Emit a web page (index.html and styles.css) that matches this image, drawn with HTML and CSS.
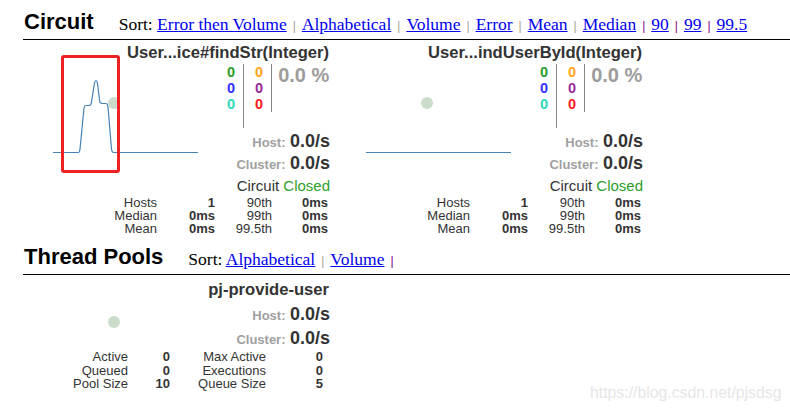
FILE: index.html
```html
<!DOCTYPE html>
<html>
<head>
<meta charset="utf-8">
<link rel="stylesheet" href="styles.css">
</head>
<body>
<div class="page">
  <section class="section">
    <div class="section-head">
      <h2>Circuit</h2>
      <div class="sort">Sort: <a href="#">Error then Volume</a><span class="sep">|</span><a href="#">Alphabetical</a><span class="sep">|</span><a href="#">Volume</a><span class="sep">|</span><a href="#">Error</a><span class="sep">|</span><a href="#">Mean</a><span class="sep">|</span><a href="#">Median</a><span class="sep visited">|</span><a href="#">90</a><span class="sep visited">|</span><a href="#">99</a><span class="sep visited">|</span><a href="#">99.5</a></div>
    </div>
    <div class="cards">
      <div class="card circuit">
        <div class="card-title">User...ice#findStr(Integer)</div>
        <div class="chart">
          <svg width="175" height="132" viewBox="0 0 175 132">
            <path d="M3 90.5 L28.5 90.5 Q29.5 90.5 30 87 L34 46 Q34.5 43.5 36 43.5 L39.5 43.5 Q41 43.5 41.5 40 L44.5 21 Q46 16 47.5 21 L49.5 38 Q50 41.5 52 41.5 L56 41.5 Q57.5 41.5 58 45 L61.5 87 Q62 90.5 63.5 90.5 L148 90.5" fill="none" stroke="#4682b4" stroke-width="1.2"/>
            <circle cx="64" cy="41" r="6" fill="#cbdccb"/>
          </svg>
        </div>
        <div class="side">
          <div class="counters">
            <div class="ccol c1"><span class="success">0</span><span class="short">0</span><span class="bad">0</span></div>
            <div class="ccol c2"><span class="timeout">0</span><span class="rejected">0</span><span class="failure">0</span></div>
            <div class="pct">0.0 %</div>
          </div>
          <div class="rate"><span class="rl">Host:</span> <span class="rv">0.0/s</span></div>
          <div class="rate"><span class="rl">Cluster:</span> <span class="rv">0.0/s</span></div>
          <div class="status">Circuit <span class="closed">Closed</span></div>
        </div>
        <div class="stats">
          <span>Hosts</span><b>1</b><span>90th</span><b>0ms</b>
          <span>Median</span><b>0ms</b><span>99th</span><b>0ms</b>
          <span>Mean</span><b>0ms</b><span>99.5th</span><b>0ms</b>
        </div>
        <div class="annot"></div>
      </div>
      <div class="card circuit">
        <div class="card-title">User...indUserById(Integer)</div>
        <div class="chart">
          <svg width="175" height="132" viewBox="0 0 175 132">
            <path d="M3 90.5 L148 90.5" fill="none" stroke="#4682b4" stroke-width="1.2"/>
            <circle cx="64" cy="41" r="6" fill="#cbdccb"/>
          </svg>
        </div>
        <div class="side">
          <div class="counters">
            <div class="ccol c1"><span class="success">0</span><span class="short">0</span><span class="bad">0</span></div>
            <div class="ccol c2"><span class="timeout">0</span><span class="rejected">0</span><span class="failure">0</span></div>
            <div class="pct">0.0 %</div>
          </div>
          <div class="rate"><span class="rl">Host:</span> <span class="rv">0.0/s</span></div>
          <div class="rate"><span class="rl">Cluster:</span> <span class="rv">0.0/s</span></div>
          <div class="status">Circuit <span class="closed">Closed</span></div>
        </div>
        <div class="stats">
          <span>Hosts</span><b>1</b><span>90th</span><b>0ms</b>
          <span>Median</span><b>0ms</b><span>99th</span><b>0ms</b>
          <span>Mean</span><b>0ms</b><span>99.5th</span><b>0ms</b>
        </div>
      </div>
    </div>
  </section>
  <section class="section pools">
    <div class="section-head">
      <h2>Thread Pools</h2>
      <div class="sort">Sort: <a href="#">Alphabetical</a><span class="sep">|</span><a href="#">Volume</a><span class="sep visited">|</span></div>
    </div>
    <div class="cards">
      <div class="card pool">
        <div class="card-title">pj-provide-user</div>
        <div class="chart">
          <svg width="175" height="50" viewBox="0 0 175 50">
            <circle cx="64" cy="23" r="6" fill="#cbdccb"/>
          </svg>
        </div>
        <div class="side">
          <div class="rate"><span class="rl">Host:</span> <span class="rv">0.0/s</span></div>
          <div class="rate"><span class="rl">Cluster:</span> <span class="rv">0.0/s</span></div>
        </div>
        <div class="stats pstats">
          <span>Active</span><b>0</b><span>Max Active</span><b>0</b>
          <span>Queued</span><b>0</b><span>Executions</span><b>0</b>
          <span>Pool Size</span><b>10</b><span>Queue Size</span><b>5</b>
        </div>
      </div>
    </div>
  </section>
  <div class="watermark">https://blog.csdn.net/pjsdsg</div>
</div>
</body>
</html>
```

FILE: styles.css
```css
html, body {
  margin: 0;
  padding: 0;
  background: #fff;
}
body {
  font-family: "Liberation Sans", Arial, sans-serif;
  color: #333;
}
.page {
  position: relative;
  width: 790px;
  height: 411px;
  overflow: hidden;
  padding-left: 23px;
  box-sizing: border-box;
}
.section-head {
  display: flex;
  align-items: baseline;
  height: 40px;
  box-sizing: border-box;
  padding: 9px 0 0 1px;
  border-bottom: 1px solid #000;
}
.section-head h2 {
  margin: 0;
  font-size: 22px;
  line-height: 26px;
  font-weight: bold;
  color: #000;
}
.sort {
  margin-left: 25px;
  font-family: "Liberation Serif", "Times New Roman", serif;
  font-size: 17.5px;
  line-height: 26px;
  color: #000;
  position: relative;
  top: 1px;
}
.sort a {
  color: #0000ee;
  text-decoration: underline;
}
.sep {
  font-family: "Liberation Sans", Arial, sans-serif;
  font-size: 12px;
  color: #a9a28f;
  margin: 0 6px;
}
.sep.visited {
  color: #800080;
}
.cards {
  display: flex;
  gap: 33px;
  padding-left: 27px;
}
.card {
  position: relative;
  width: 280px;
  display: grid;
  grid-template-columns: 175px 105px;
  align-items: start;
}
.card-title {
  grid-column: 1 / -1;
  text-align: right;
  font-size: 16.6px;
  font-weight: bold;
  line-height: 18px;
  margin-top: 4px;
  padding-right: 1px;
  color: #333;
  white-space: nowrap;
}
.chart svg {
  display: block;
}
.side {
  display: flex;
  flex-direction: column;
}
.counters {
  display: flex;
  align-items: flex-start;
  margin-top: 2px;
  margin-bottom: 3px;
  font-size: 14.5px;
  font-weight: bold;
  line-height: 16px;
  white-space: nowrap;
}
.ccol {
  display: flex;
  flex-direction: column;
  border-right: 1px solid #888;
}
.ccol.c1 {
  padding: 0 8px 16px 2px;
}
.ccol.c2 {
  padding: 0 8px 0 11px;
}
.pct {
  margin-left: 6px;
  font-size: 20px;
  line-height: 22px;
  color: #9c9c9c;
}
.success { color: #2a9d2a; }
.short { color: #3030ff; }
.bad { color: #2fd8b8; }
.timeout { color: #ffa520; }
.rejected { color: #9a2a9a; }
.failure { color: #ff2020; }
.rate {
  text-align: right;
  line-height: 21px;
  white-space: nowrap;
}
.rl {
  font-size: 13px;
  font-weight: bold;
  color: #a0a0a0;
}
.rv {
  font-size: 18px;
  font-weight: bold;
  color: #333;
}
.status {
  text-align: right;
  font-size: 15px;
  line-height: 21px;
  color: #333;
}
.closed {
  color: #2ca02c;
}
.stats {
  grid-column: 1 / -1;
  display: grid;
  grid-template-columns: 107px 58px 57px 56px;
  margin-top: 0;
  font-size: 13px;
  line-height: 13px;
  text-align: right;
  color: #333;
  white-space: nowrap;
}
.stats span {
  font-weight: normal;
}
.stats b {
  font-weight: bold;
}
.annot {
  position: absolute;
  left: 11px;
  top: 15px;
  width: 59px;
  height: 118px;
  box-sizing: border-box;
  border: 3px solid #ee2222;
  border-radius: 3px;
}
.pools {
  margin-top: 0;
}
.pool .card-title {
  margin-top: 6px;
}
.pool .rate {
  line-height: 23px;
}
.pool .side {
  padding-top: 4px;
}
.pstats {
  grid-template-columns: 78px 42px 96px 57px;
  line-height: 13.5px;
  margin-top: -1px;
}
.watermark {
  position: absolute;
  left: 590px;
  top: 384px;
  font-size: 15.8px;
  color: #e6e6e6;
}
```
